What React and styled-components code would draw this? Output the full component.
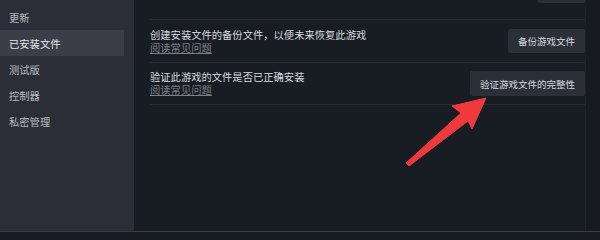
import React from "react";
import styled, { createGlobalStyle } from "styled-components";

const Global = createGlobalStyle`
  html, body { margin: 0; padding: 0; background: #181c23; }
  * { box-sizing: border-box; }
`;

const Page = styled.div`
  position: relative;
  width: 600px;
  height: 232px;
  display: flex;
  overflow: hidden;
  border-bottom: 1px solid #3a3d44;
  font-family: "Noto Sans CJK SC", "Noto Sans", sans-serif;
`;

const Sidebar = styled.nav`
  width: 134px;
  flex-shrink: 0;
  background: #2b2e36;
  padding-top: 4px;
  display: flex;
  flex-direction: column;
`;

const NavItem = styled.div`
  height: 26px;
  width: 124px;
  display: flex;
  align-items: center;
  padding-left: 9px;
  font-size: 10.3px;
  color: ${(p) => (p.$active ? "#e4e6e9" : "#b9bcc2")};
  background: ${(p) => (p.$active ? "#3b3e48" : "transparent")};
`;

const Main = styled.main`
  flex: 1;
  display: flex;
  background: #181c23;
`;

const Content = styled.div`
  flex: 1;
  padding-left: 16px;
  display: flex;
  flex-direction: column;
`;

const TopStub = styled.div`
  height: 19px;
  display: flex;
  justify-content: flex-end;
`;

const StubButton = styled.div`
  width: 47px;
  height: 3px;
  background: #2a2f38;
  border-radius: 0 0 2px 2px;
`;

const Row = styled.div`
  height: ${(p) => p.$h}px;
  border-top: 1px solid #272b33;
  border-bottom: ${(p) => (p.$last ? "1px solid #272b33" : "none")};
  display: flex;
  align-items: center;
  justify-content: space-between;
`;

const TextBlock = styled.div`
  display: flex;
  flex-direction: column;
  gap: 1px;
`;

const Title = styled.div`
  font-size: 10.3px;
  line-height: 12px;
  color: #d9dcdf;
`;

const Link = styled.a`
  display: block;
  font-size: 10.3px;
  line-height: 12px;
  color: #7c8087;
  text-decoration: underline;
  text-underline-offset: 1px;
`;

const Button = styled.div`
  height: ${(p) => p.$h}px;
  padding: 0 10px;
  display: flex;
  align-items: center;
  background: #2a2f38;
  border-radius: 2px;
  color: #d6d9dd;
  font-size: 9.5px;
  white-space: nowrap;
`;

const ScrollTrack = styled.div`
  width: 15px;
  flex-shrink: 0;
  background: #161a20;
  border-left: 1px solid #1d2129;
`;

const Arrow = styled.svg`
  position: absolute;
  left: 0;
  top: 0;
  pointer-events: none;
`;

export default function App() {
  return (
    <>
      <Global />
      <Page>
        <Sidebar>
          <NavItem>更新</NavItem>
          <NavItem $active>已安装文件</NavItem>
          <NavItem>测试版</NavItem>
          <NavItem>控制器</NavItem>
          <NavItem>私密管理</NavItem>
        </Sidebar>
        <Main>
          <Content>
            <TopStub>
              <StubButton />
            </TopStub>
            <Row $h={43}>
              <TextBlock>
                <Title>创建安装文件的备份文件，以便未来恢复此游戏</Title>
                <Link>阅读常见问题</Link>
              </TextBlock>
              <Button $h={24}>备份游戏文件</Button>
            </Row>
            <Row $h={43} $last>
              <TextBlock>
                <Title>验证此游戏的文件是否已正确安装</Title>
                <Link>阅读常见问题</Link>
              </TextBlock>
              <Button $h={25}>验证游戏文件的完整性</Button>
            </Row>
          </Content>
          <ScrollTrack />
        </Main>
        <Arrow width="600" height="232" viewBox="0 0 600 232">
          <polygon
            points="486,98 452,106 461,113 406,163 409,166 468,121 472,129"
            fill="#f0393c"
            stroke="#f0393c"
            strokeWidth="1"
            strokeLinejoin="round"
          />
        </Arrow>
      </Page>
    </>
  );
}
